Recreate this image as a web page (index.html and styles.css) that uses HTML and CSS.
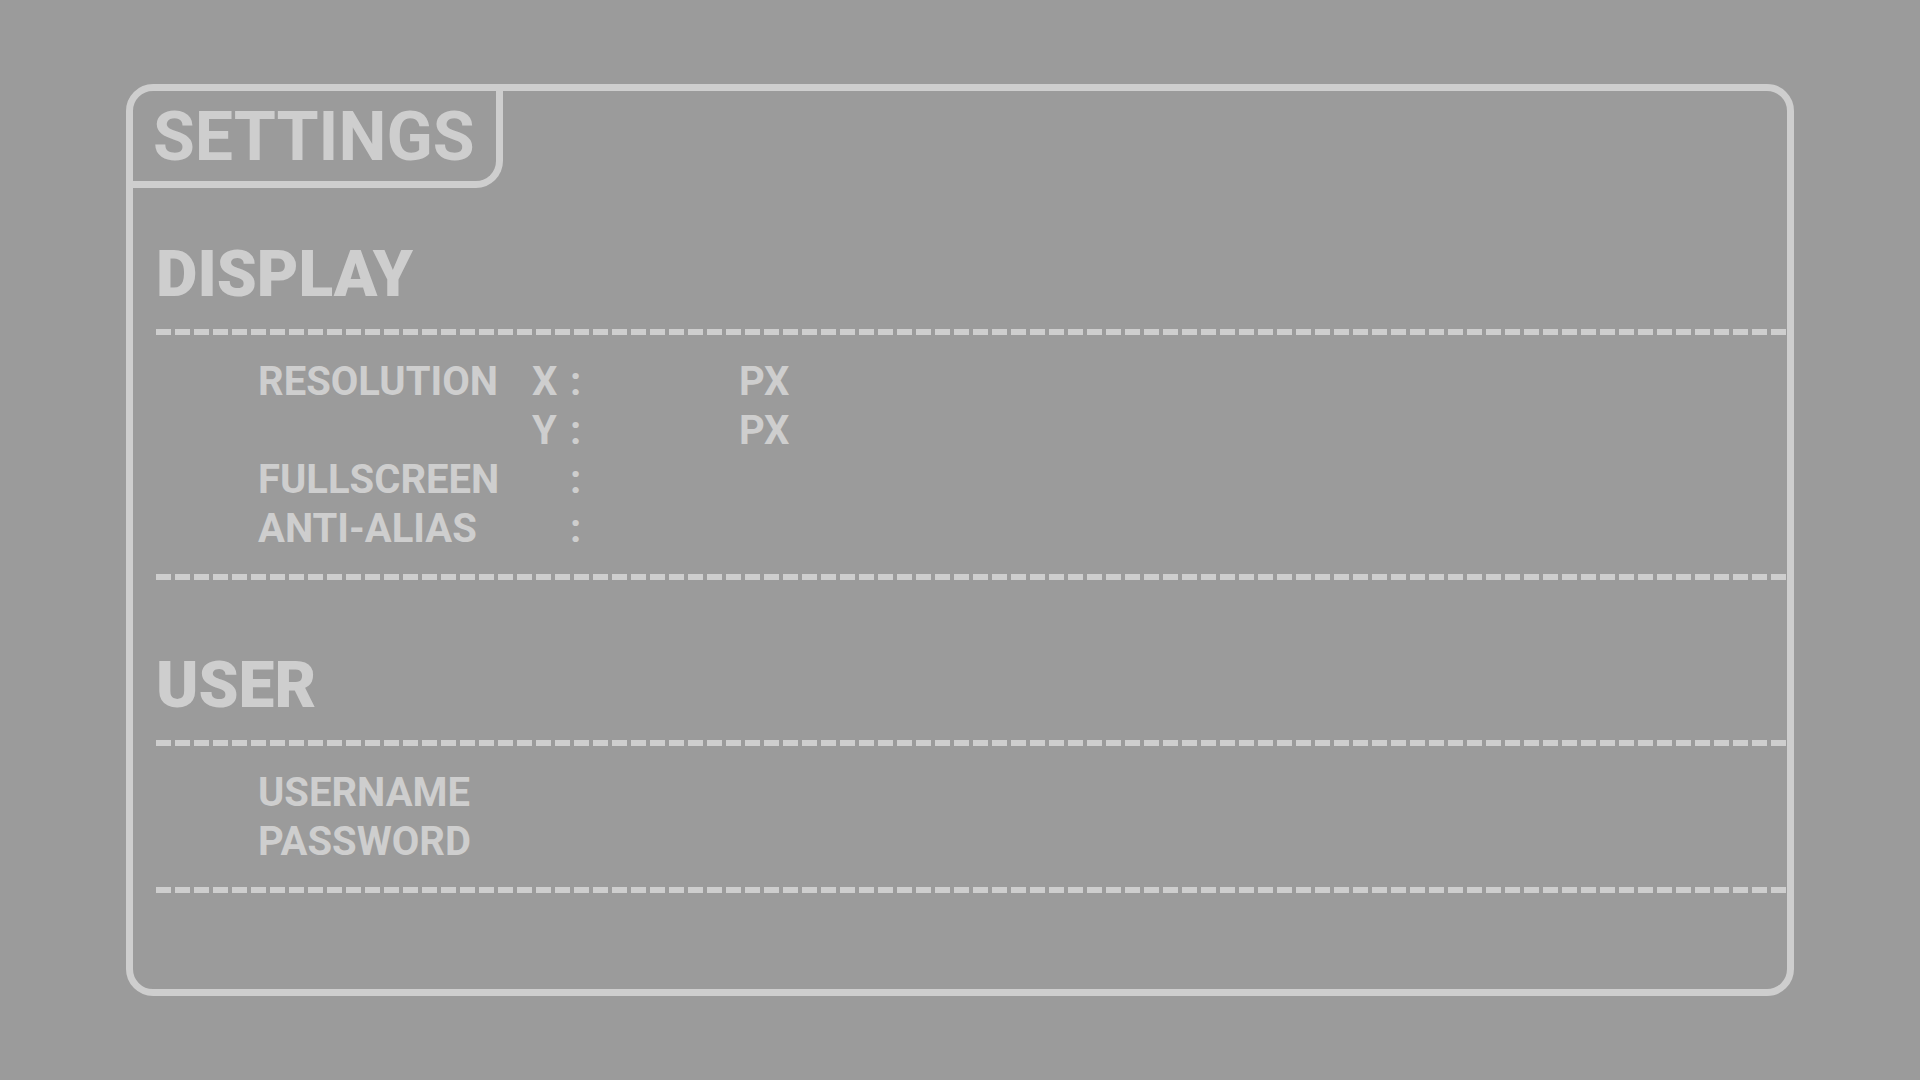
FILE: index.html
```html
<!DOCTYPE html>
<html lang="en">
<head>
<meta charset="utf-8">
<meta name="viewport" content="width=device-width, initial-scale=1">
<title>Settings</title>
<link rel="stylesheet" href="styles.css">
</head>
<body>
<main class="panel">
  <h1 class="tab">SETTINGS</h1>
  <form class="sections">
    <section>
      <h2 class="heading">DISPLAY</h2>
      <div class="rows">
        <div class="row">
          <span>RESOLUTION</span>
          <label for="res-x">X</label>
          <span>:</span>
          <input class="field" id="res-x" type="text">
          <span>PX</span>
        </div>
        <div class="row">
          <span></span>
          <label for="res-y">Y</label>
          <span>:</span>
          <input class="field" id="res-y" type="text">
          <span>PX</span>
        </div>
        <div class="row">
          <label class="wide" for="fullscreen">FULLSCREEN</label>
          <span>:</span>
          <input class="field" id="fullscreen" type="checkbox">
        </div>
        <div class="row">
          <label class="wide" for="anti-alias">ANTI-ALIAS</label>
          <span>:</span>
          <input class="field" id="anti-alias" type="checkbox">
        </div>
      </div>
    </section>
    <section>
      <h2 class="heading">USER</h2>
      <div class="rows">
        <div class="row">
          <label class="wide" for="username">USERNAME</label>
          <span></span>
          <input class="field" id="username" type="text" autocomplete="off">
        </div>
        <div class="row">
          <label class="wide" for="password">PASSWORD</label>
          <span></span>
          <input class="field" id="password" type="password" autocomplete="off">
        </div>
      </div>
    </section>
  </form>
</main>
</body>
</html>
```
FILE: styles.css
```css
:root {
  --ink: #cecece;
  --ground: #9b9b9b;
  --dashes: repeating-linear-gradient(90deg, var(--ink) 0 15px, transparent 15px 19px);
}

* {
  box-sizing: border-box;
}

body {
  display: flex;
  min-height: 100vh;
  margin: 0;
  padding: 84px 126px;
  background: var(--ground);
  color: var(--ink);
  font-family: Roboto, "Liberation Sans", sans-serif;
}

.panel {
  flex: 1;
  min-width: 0;
  border: 7px solid var(--ink);
  border-radius: 27px;
}

.tab {
  width: fit-content;
  min-width: 370px;
  margin: 0;
  padding: 2px 20px 0;
  border: solid var(--ink);
  border-width: 0 7px 7px 0;
  border-bottom-right-radius: 27px;
  font-size: 68px;
  font-weight: 700;
  line-height: 88px;
}

.sections {
  display: flex;
  flex-direction: column;
  gap: 66px;
  padding: 47px 1px 45px 23px;
}

.heading {
  margin: 0 0 14px;
  font-size: 64px;
  font-weight: 900;
  line-height: 80px;
}

.rows {
  padding: 28px 0 27px 102px;
  background:
    var(--dashes) top left / 100% 6px no-repeat,
    var(--dashes) bottom left / 100% 6px no-repeat;
}

.row {
  display: grid;
  grid-template-columns: 274px 38px 20px 149px 1fr;
  font-size: 40px;
  font-weight: 700;
  line-height: 49px;
  min-height: 49px;
}

.wide {
  grid-column: span 2;
}

.field {
  width: 100%;
  min-width: 0;
  height: 49px;
  margin: 0;
  padding: 0;
  border: 0;
  appearance: none;
  background: transparent;
  color: inherit;
  font: inherit;
}
```
